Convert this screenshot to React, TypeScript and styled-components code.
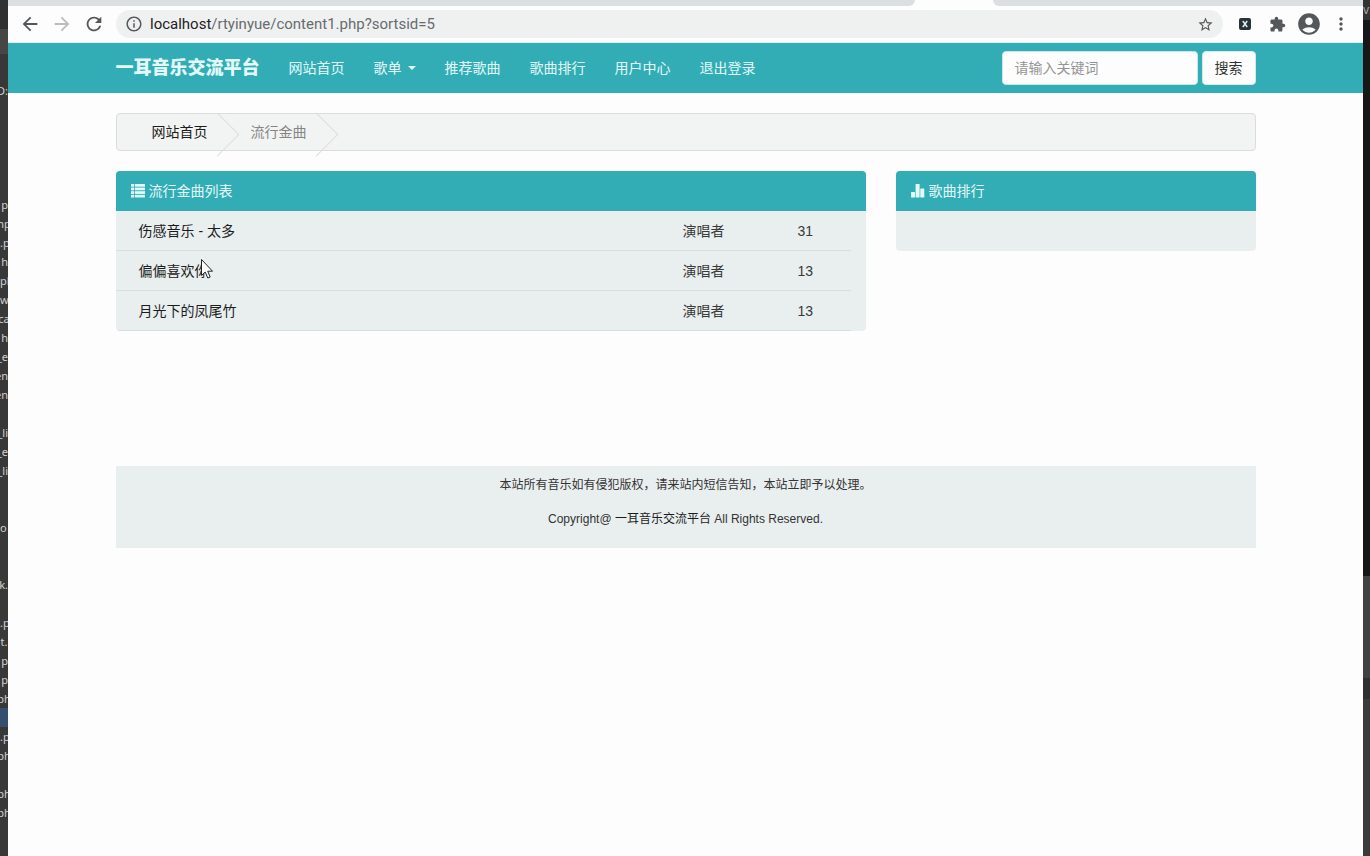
import React from "react";
import styled, { createGlobalStyle } from "styled-components";
import {
  MdAccountCircle,
  MdArrowBack,
  MdArrowForward,
  MdExtension,
  MdInfoOutline,
  MdMoreVert,
  MdRefresh,
  MdStarBorder,
} from "react-icons/md";

const teal = "#32adb5";
const mist = "#e9eeef";

const GlobalStyle = createGlobalStyle`
  *, *::before, *::after { box-sizing: border-box; }
  body {
    margin: 0;
    background: #383838;
    color: #333;
    font: 14px/20px "Liberation Sans", "Noto Sans CJK SC", sans-serif;
  }
  button, input { font: inherit; }
  a { color: inherit; text-decoration: none; }
`;

const Desktop = styled.div`
  display: grid;
  grid-template-columns: 8px minmax(0, 1fr) 7px;
  height: 100vh;
  overflow: hidden;
`;

/* Editor showing at both sides of the browser window */
const FileStrip = styled.div`
  padding-top: 81px;
  overflow: hidden;
  background: linear-gradient(#303030 0 29px, #464646 29px 54px, #383838 54px);
  color: #d0d0d0;
  font: 11px/19px "Noto Sans", sans-serif;
`;

type Align = "flex-start" | "center" | "flex-end";

const FileRow = styled.div<{ $align?: Align; $selected?: boolean }>`
  display: flex;
  justify-content: ${(p) => p.$align ?? "flex-end"};
  height: 19px;
  overflow: hidden;
  white-space: nowrap;
  background: ${(p) => (p.$selected ? "#34506e" : "transparent")};
`;

const EdgeStrip = styled.div`
  overflow: hidden;
  background: linear-gradient(
    #333 0 20px,
    #171717 20px 576px,
    #424242 576px 678px,
    #303030 678px 699px,
    #3b3b3b 699px
  );
  color: #aaa;
  font: 12px/20px "Noto Sans", sans-serif;
`;

const Browser = styled.div`
  display: flex;
  flex-direction: column;
  min-width: 0;
  background: #fdfdfd;
`;

const TabStrip = styled.div`
  display: grid;
  grid-template-columns: 907fr 78px 370fr;
  flex: none;
  height: 6px;
  background: #fdfdfd;
`;

const TabBack = styled.div<{ $side: "left" | "right" }>`
  grid-column: ${(p) => (p.$side === "left" ? 1 : 3)};
  background: #dcdfe2;
  border-radius: ${(p) => (p.$side === "left" ? "0 0 6px 0" : "0 0 0 6px")};
`;

const Toolbar = styled.div`
  display: flex;
  align-items: center;
  flex: none;
  height: 37px;
  padding: 0 6px;
  border-bottom: 1px solid #dcefef;
`;

const ToolButton = styled.button<{ $dim?: boolean }>`
  display: flex;
  align-items: center;
  justify-content: center;
  flex: none;
  width: 32px;
  height: 28px;
  padding: 0;
  border: 0;
  background: none;
  color: ${(p) => (p.$dim ? "#b9bbbd" : "#55585b")};
`;

const AddressBar = styled.div`
  display: flex;
  align-items: center;
  flex: 1;
  height: 28px;
  margin: 0 6px;
  padding: 0 9px;
  gap: 7px;
  border-radius: 14px;
  background: #eff1f1;
  color: #55585b;
`;

const Address = styled.div`
  flex: 1;
  color: #686b6e;
  font: 15px/20px Roboto, sans-serif;

  b { color: #222; font-weight: 400; }
`;

const StarButton = styled(ToolButton)`
  width: 18px;
`;

const Container = styled.div`
  width: 100%;
  max-width: 1140px;
  margin: 0 auto;
`;

const Header = styled.header`
  background: ${teal};
  color: #e4fafa;
`;

const HeaderInner = styled(Container)`
  display: flex;
  align-items: center;
  height: 50px;
`;

const Brand = styled.a`
  margin-right: 29px;
  font-size: 18px;
  font-weight: 900;
`;

const Nav = styled.nav`
  display: flex;
  flex: 1;
  gap: 29px;
`;

const NavLink = styled.a`
  display: flex;
  align-items: center;
  gap: 6px;
`;

const Caret = styled.span`
  border: 4px solid transparent;
  border-top-color: currentColor;
  border-bottom: 0;
`;

const SearchForm = styled.form`
  display: flex;
  gap: 4px;
`;

const SearchInput = styled.input`
  width: 196px;
  height: 34px;
  padding: 0 12px;
  border: 1px solid #c9e6e8;
  border-radius: 4px;
  background: #fdfdfd;

  &::placeholder { color: #949494; opacity: 1; }
`;

const SearchButton = styled.button`
  height: 34px;
  padding: 0 12px;
  border: 1px solid #d3e9ea;
  border-radius: 4px;
  background: #fdfdfd;
  color: #333;
`;

const Breadcrumb = styled.ol`
  display: flex;
  height: 38px;
  margin: 20px 0;
  padding: 0 0 0 35px;
  border: 1px solid #dcdcdc;
  border-radius: 4px;
  background: #f2f3f3;
  list-style: none;
  line-height: 36px;
`;

const Crumb = styled.li<{ $current?: boolean }>`
  position: relative;
  padding-right: 43px;
  color: ${(p) => (p.$current ? "#858585" : "#1c1c1c")};

  &::after {
    content: "";
    position: absolute;
    top: 5px;
    right: 18px;
    width: 31px;
    height: 31px;
    border: solid #dedede;
    border-width: 1px 1px 0 0;
    transform: rotate(45deg);
  }
`;

const Columns = styled.main`
  display: grid;
  grid-template-columns: 25fr 12fr;
  gap: 30px;
  align-items: start;
`;

const Panel = styled.section`
  overflow: hidden;
  border-radius: 4px;
  background: ${mist};
`;

const PanelTitle = styled.h2`
  display: flex;
  align-items: center;
  gap: 4px;
  height: 40px;
  margin: 0;
  padding: 0 15px;
  background: ${teal};
  color: #e4fafa;
  font-size: 14px;
  font-weight: 400;
`;

const PanelBody = styled.div`
  min-height: 40px;
  padding-right: 15px;
`;

const SongTable = styled.table`
  width: 100%;
  border-collapse: separate;
  border-spacing: 0;
  table-layout: fixed;
`;

const SongCell = styled.td<{ $width?: number }>`
  width: ${(p) => (p.$width ? `${p.$width}px` : "auto")};
  height: 40px;
  padding: 0;
  border-bottom: 1px solid #d8dddf;
  color: #3a3a3a;

  &:first-child { padding-left: 23px; color: #1c1c1c; }
`;

const Footer = styled.footer`
  display: flex;
  flex-direction: column;
  gap: 17px;
  margin-top: 135px;
  padding: 11px 0 20px;
  background: ${mist};
  font-size: 12px;
  line-height: 17px;
  text-align: center;

  p { margin: 0; }
  a { color: #1c1c1c; }
`;

const Pointer = styled.svg`
  position: absolute;
  top: 258px;
  left: 200px;
`;

const files: Record<number, [string, Align?]> = {
  0: ["D:"],
  6: ["p"],
  7: ["np", "center"],
  8: [".p", "flex-start"],
  9: ["h"],
  10: ["pl", "flex-start"],
  11: ["wo", "flex-start"],
  12: ["ca", "center"],
  13: ["h"],
  14: ["_e"],
  15: ["en"],
  16: ["en"],
  18: ["_li"],
  19: ["_e"],
  20: ["_li"],
  23: ["o", "flex-start"],
  26: ["k."],
  28: [".p", "flex-start"],
  29: ["t.", "center"],
  30: ["p"],
  31: ["p"],
  32: ["ph", "center"],
  34: [".p", "flex-start"],
  35: ["ph", "center"],
  37: ["ph", "center"],
  38: ["ph", "center"],
};
const selectedRow = 33;

const links = ["网站首页", "歌单", "推荐歌曲", "歌曲排行", "用户中心", "退出登录"];

const songs = [
  { name: "伤感音乐 - 太多", plays: 31 },
  { name: "偏偏喜欢你", plays: 13 },
  { name: "月光下的凤尾竹", plays: 13 },
];

const ListIcon = () => (
  <svg width="14" height="14" viewBox="0 0 14 14" fill="currentColor" aria-hidden="true">
    {[0, 3.6, 7.2, 10.8].map((y) => (
      <React.Fragment key={y}>
        <rect x="0" y={y} width="3" height="2.7" />
        <rect x="3.8" y={y} width="10.2" height="2.7" />
      </React.Fragment>
    ))}
  </svg>
);

const StatsIcon = () => (
  <svg width="14" height="14" viewBox="0 0 14 14" fill="currentColor" aria-hidden="true">
    <rect x="0" y="8" width="4" height="5.5" rx="0.5" />
    <rect x="4.6" y="0" width="4" height="13.5" rx="0.5" />
    <rect x="9.3" y="4.5" width="4" height="9" rx="0.5" />
  </svg>
);

const XBadge = () => (
  <svg width="12" height="12" viewBox="0 0 12 12" aria-hidden="true">
    <rect width="12" height="12" rx="2" fill="#263338" />
    <path d="M3.8 3l4.4 6M8.2 3L3.8 9" stroke="#e8eeee" strokeWidth="1.5" />
  </svg>
);

export default function App() {
  return (
    <Desktop>
      <GlobalStyle />
      <FileStrip>
        {Array.from({ length: 41 }, (_, i) => (
          <FileRow key={i} $align={files[i]?.[1]} $selected={i === selectedRow}>
            {files[i]?.[0]}
          </FileRow>
        ))}
      </FileStrip>

      <Browser>
        <TabStrip>
          <TabBack $side="left" />
          <TabBack $side="right" />
        </TabStrip>
        <Toolbar>
          <ToolButton aria-label="Back"><MdArrowBack size={22} /></ToolButton>
          <ToolButton aria-label="Forward" $dim><MdArrowForward size={22} /></ToolButton>
          <ToolButton aria-label="Reload"><MdRefresh size={22} /></ToolButton>
          <AddressBar>
            <MdInfoOutline size={18} />
            <Address><b>localhost</b>/rtyinyue/content1.php?sortsid=5</Address>
            <StarButton aria-label="Bookmark"><MdStarBorder size={17} /></StarButton>
          </AddressBar>
          <ToolButton aria-label="X extension"><XBadge /></ToolButton>
          <ToolButton aria-label="Extensions"><MdExtension size={17} /></ToolButton>
          <ToolButton aria-label="Profile"><MdAccountCircle size={26} /></ToolButton>
          <ToolButton aria-label="Menu"><MdMoreVert size={20} /></ToolButton>
        </Toolbar>

        <Header>
          <HeaderInner>
            <Brand href="#">一耳音乐交流平台</Brand>
            <Nav>
              {links.map((label) => (
                <NavLink key={label} href="#">
                  {label}
                  {label === "歌单" && <Caret />}
                </NavLink>
              ))}
            </Nav>
            <SearchForm>
              <SearchInput type="text" aria-label="关键词" placeholder="请输入关键词" />
              <SearchButton type="button">搜索</SearchButton>
            </SearchForm>
          </HeaderInner>
        </Header>

        <Container>
          <Breadcrumb>
            <Crumb><a href="#">网站首页</a></Crumb>
            <Crumb $current>流行金曲</Crumb>
          </Breadcrumb>
          <Columns>
            <Panel>
              <PanelTitle><ListIcon />流行金曲列表</PanelTitle>
              <PanelBody>
                <SongTable>
                  <tbody>
                    {songs.map((song) => (
                      <tr key={song.name}>
                        <SongCell><a href="#">{song.name}</a></SongCell>
                        <SongCell $width={115}>演唱者</SongCell>
                        <SongCell $width={53}>{song.plays}</SongCell>
                      </tr>
                    ))}
                  </tbody>
                </SongTable>
              </PanelBody>
            </Panel>
            <Panel>
              <PanelTitle><StatsIcon />歌曲排行</PanelTitle>
              <PanelBody />
            </Panel>
          </Columns>
          <Footer>
            <p>本站所有音乐如有侵犯版权，请来站内短信告知，本站立即予以处理。</p>
            <p>Copyright@ <a href="#">一耳音乐交流平台</a> All Rights Reserved.</p>
          </Footer>
        </Container>
      </Browser>

      <EdgeStrip>v</EdgeStrip>

      <Pointer width="14" height="21" viewBox="0 0 14 21" aria-hidden="true">
        <path
          d="M1.5 1.5V17.5L5.2 14L7.8 20L10.2 19L7.7 13.2H12.5Z"
          fill="#fff"
          stroke="#222"
        />
      </Pointer>
    </Desktop>
  );
}
